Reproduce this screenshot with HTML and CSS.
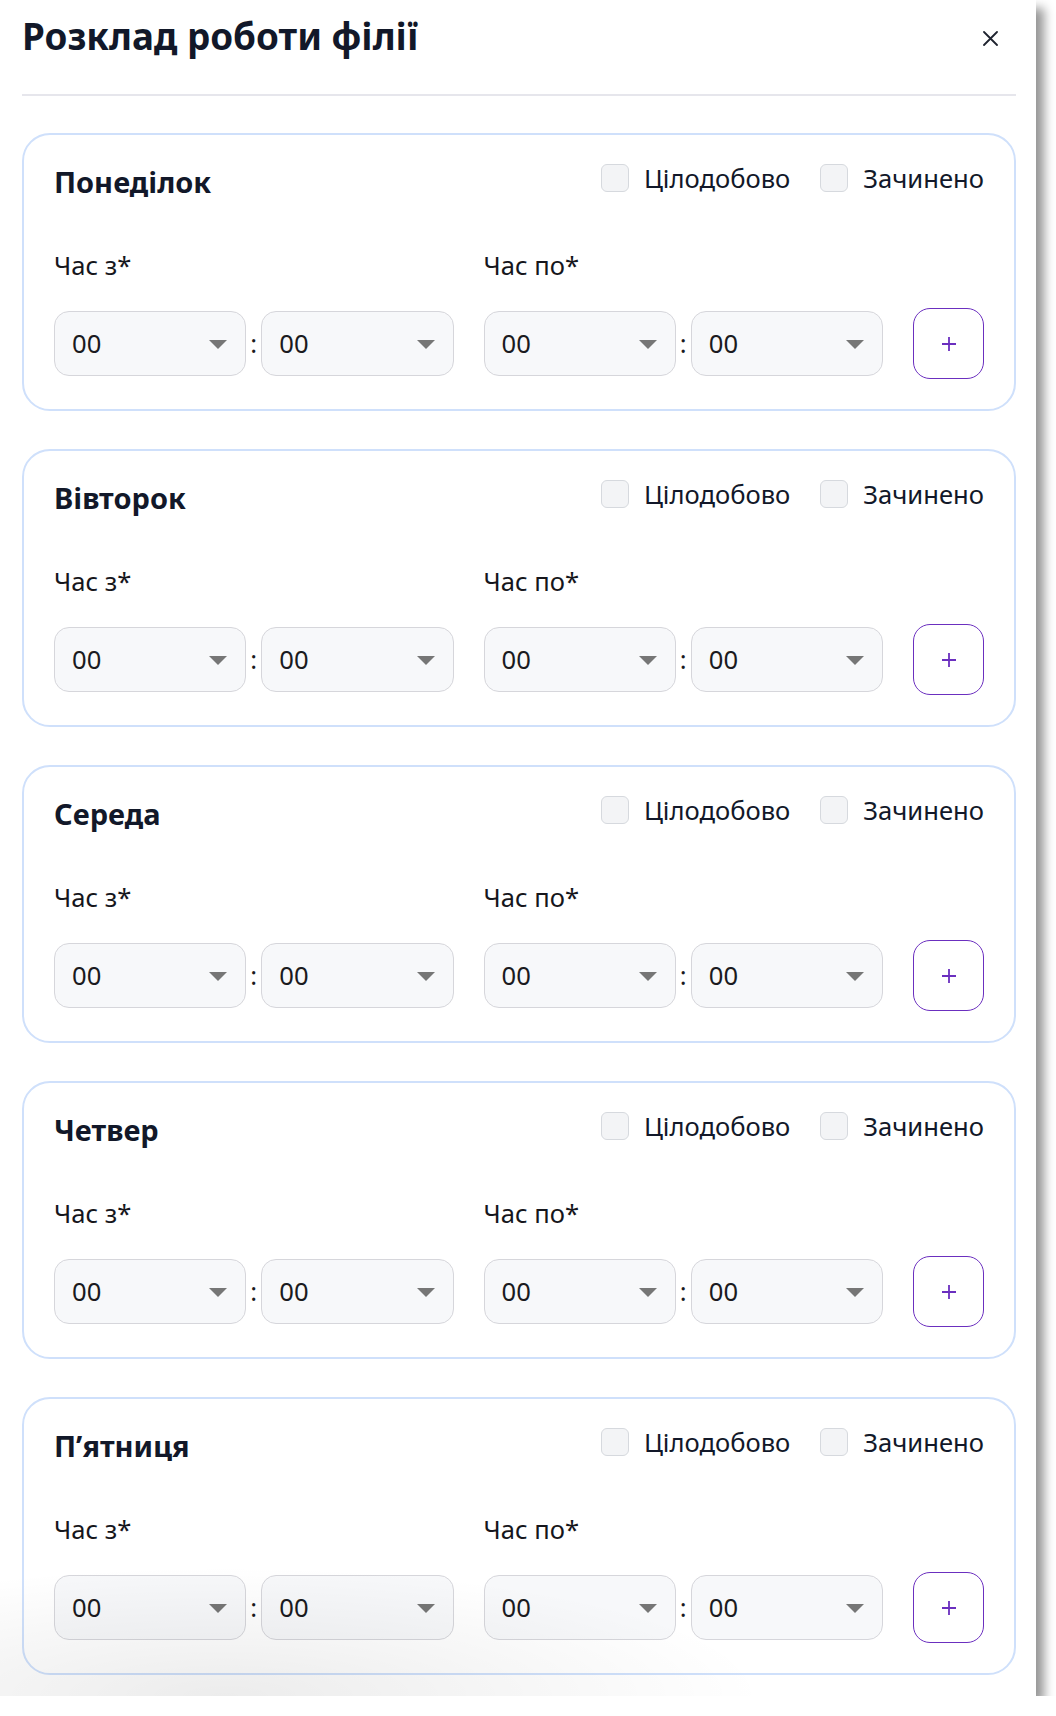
FILE: index.html
```html
<!DOCTYPE html>
<html lang="uk">
<head>
<meta charset="utf-8">
<title>Розклад роботи філії</title>
<link rel="stylesheet" href="styles.css">
</head>
<body>
<div class="modal">
  <header class="modal-head">
    <h1 class="modal-title">Розклад роботи філії</h1>
    <button class="close" aria-label="Закрити">
      <svg width="15" height="15" viewBox="0 0 15 15"><path d="M1 1L14 14M14 1L1 14" stroke="#1f2430" stroke-width="1.8" stroke-linecap="round"/></svg>
    </button>
  </header>

  <div class="days">
    <section class="day-card">
      <div class="day-head">
        <h2 class="day-name">Понеділок</h2>
        <div class="day-opts">
          <label class="opt"><span class="box"></span><span>Цілодобово</span></label>
          <label class="opt"><span class="box"></span><span>Зачинено</span></label>
        </div>
      </div>
      <div class="times">
        <div class="field-label">Час з*</div>
        <div class="field-label">Час по*</div>
        <div></div>
        <div class="pair"><div class="sel"><span>00</span><span class="caret"></span></div><span class="colon">:</span><div class="sel"><span>00</span><span class="caret"></span></div></div>
        <div class="pair"><div class="sel"><span>00</span><span class="caret"></span></div><span class="colon">:</span><div class="sel"><span>00</span><span class="caret"></span></div></div>
        <button class="add" aria-label="Додати"><svg width="16" height="16" viewBox="0 0 16 16"><path d="M8 1V15M1 8H15" stroke="#6b2fbf" stroke-width="1.8"/></svg></button>
      </div>
    </section>

    <section class="day-card">
      <div class="day-head">
        <h2 class="day-name">Вівторок</h2>
        <div class="day-opts">
          <label class="opt"><span class="box"></span><span>Цілодобово</span></label>
          <label class="opt"><span class="box"></span><span>Зачинено</span></label>
        </div>
      </div>
      <div class="times">
        <div class="field-label">Час з*</div>
        <div class="field-label">Час по*</div>
        <div></div>
        <div class="pair"><div class="sel"><span>00</span><span class="caret"></span></div><span class="colon">:</span><div class="sel"><span>00</span><span class="caret"></span></div></div>
        <div class="pair"><div class="sel"><span>00</span><span class="caret"></span></div><span class="colon">:</span><div class="sel"><span>00</span><span class="caret"></span></div></div>
        <button class="add" aria-label="Додати"><svg width="16" height="16" viewBox="0 0 16 16"><path d="M8 1V15M1 8H15" stroke="#6b2fbf" stroke-width="1.8"/></svg></button>
      </div>
    </section>

    <section class="day-card">
      <div class="day-head">
        <h2 class="day-name">Середа</h2>
        <div class="day-opts">
          <label class="opt"><span class="box"></span><span>Цілодобово</span></label>
          <label class="opt"><span class="box"></span><span>Зачинено</span></label>
        </div>
      </div>
      <div class="times">
        <div class="field-label">Час з*</div>
        <div class="field-label">Час по*</div>
        <div></div>
        <div class="pair"><div class="sel"><span>00</span><span class="caret"></span></div><span class="colon">:</span><div class="sel"><span>00</span><span class="caret"></span></div></div>
        <div class="pair"><div class="sel"><span>00</span><span class="caret"></span></div><span class="colon">:</span><div class="sel"><span>00</span><span class="caret"></span></div></div>
        <button class="add" aria-label="Додати"><svg width="16" height="16" viewBox="0 0 16 16"><path d="M8 1V15M1 8H15" stroke="#6b2fbf" stroke-width="1.8"/></svg></button>
      </div>
    </section>

    <section class="day-card">
      <div class="day-head">
        <h2 class="day-name">Четвер</h2>
        <div class="day-opts">
          <label class="opt"><span class="box"></span><span>Цілодобово</span></label>
          <label class="opt"><span class="box"></span><span>Зачинено</span></label>
        </div>
      </div>
      <div class="times">
        <div class="field-label">Час з*</div>
        <div class="field-label">Час по*</div>
        <div></div>
        <div class="pair"><div class="sel"><span>00</span><span class="caret"></span></div><span class="colon">:</span><div class="sel"><span>00</span><span class="caret"></span></div></div>
        <div class="pair"><div class="sel"><span>00</span><span class="caret"></span></div><span class="colon">:</span><div class="sel"><span>00</span><span class="caret"></span></div></div>
        <button class="add" aria-label="Додати"><svg width="16" height="16" viewBox="0 0 16 16"><path d="M8 1V15M1 8H15" stroke="#6b2fbf" stroke-width="1.8"/></svg></button>
      </div>
    </section>

    <section class="day-card">
      <div class="day-head">
        <h2 class="day-name">П’ятниця</h2>
        <div class="day-opts">
          <label class="opt"><span class="box"></span><span>Цілодобово</span></label>
          <label class="opt"><span class="box"></span><span>Зачинено</span></label>
        </div>
      </div>
      <div class="times">
        <div class="field-label">Час з*</div>
        <div class="field-label">Час по*</div>
        <div></div>
        <div class="pair"><div class="sel"><span>00</span><span class="caret"></span></div><span class="colon">:</span><div class="sel"><span>00</span><span class="caret"></span></div></div>
        <div class="pair"><div class="sel"><span>00</span><span class="caret"></span></div><span class="colon">:</span><div class="sel"><span>00</span><span class="caret"></span></div></div>
        <button class="add" aria-label="Додати"><svg width="16" height="16" viewBox="0 0 16 16"><path d="M8 1V15M1 8H15" stroke="#6b2fbf" stroke-width="1.8"/></svg></button>
      </div>
    </section>
  </div>
  <div class="fade"></div>
</div>
</body>
</html>
```
FILE: styles.css
```css
* { box-sizing: border-box; }

html, body {
  margin: 0;
  padding: 0;
  background: #ffffff;
}

body {
  font-family: "Noto Sans", "Open Sans", "DejaVu Sans", sans-serif;
  color: #16161c;
}

.modal {
  position: relative;
  width: 1036px;
  padding: 0 20px 21px 22px;
  background: #ffffff;
  box-shadow: 8px 8px 10px rgba(0, 0, 0, 0.42);
  overflow: hidden;
}

.modal-head {
  display: flex;
  justify-content: space-between;
  align-items: flex-start;
  padding-top: 12px;
  padding-bottom: 34px;
  border-bottom: 2px solid #e6e6ec;
}

.modal-title {
  margin: 0;
  font-size: 36.8px;
  line-height: 48px;
  font-weight: 700;
  color: #121829;
}

.close {
  margin: 19px 18px 0 0;
  padding: 0;
  border: 0;
  background: none;
  width: 15px;
  height: 15px;
  display: block;
}
.close svg { display: block; }

.days {
  display: flex;
  flex-direction: column;
  gap: 38px;
  margin-top: 37px;
}

.day-card {
  border: 2px solid #cfe0fb;
  border-radius: 28px;
  padding: 28px 30px 30px;
}

.day-head {
  display: flex;
  justify-content: space-between;
  align-items: flex-start;
  margin-bottom: 49px;
}

.day-name {
  margin: 0;
  font-size: 29px;
  line-height: 38px;
  font-weight: 700;
  color: #121829;
}

.day-opts {
  display: flex;
  gap: 30px;
}

.opt {
  display: flex;
  align-items: flex-start;
  gap: 15px;
  font-size: 25.6px;
  line-height: 32px;
  color: #121829;
}

.box {
  width: 28px;
  height: 28px;
  margin-top: 1px;
  border: 1px solid #d6d9de;
  border-radius: 6px;
  background: #f3f4f6;
  flex: none;
}

.times {
  display: grid;
  grid-template-columns: 1fr 1fr 71px;
  column-gap: 30px;
  row-gap: 26px;
  align-items: center;
}

.field-label {
  font-size: 25.6px;
  line-height: 32px;
  color: #16161c;
}

.pair {
  display: grid;
  grid-template-columns: 1fr 15px 1fr;
  align-items: center;
}

.sel {
  height: 65px;
  border: 1px solid #d6d6db;
  border-radius: 15px;
  background: #f7f8fa;
  display: flex;
  align-items: center;
  justify-content: space-between;
  padding: 0 18px 0 17px;
  font-size: 25.6px;
  color: #1a1a20;
}

.caret {
  width: 0;
  height: 0;
  border-left: 9px solid transparent;
  border-right: 9px solid transparent;
  border-top: 9px solid #767676;
  margin-top: 2px;
}

.colon {
  text-align: center;
  font-size: 25.6px;
  line-height: 32px;
  color: #1a1a20;
}

.add {
  width: 71px;
  height: 71px;
  border: 1.5px solid #6b2fbf;
  border-radius: 17px;
  background: #ffffff;
  padding: 0;
  display: flex;
  align-items: center;
  justify-content: center;
}
.add svg { display: block; }

.fade {
  position: absolute;
  left: 0;
  bottom: 0;
  width: 900px;
  height: 130px;
  pointer-events: none;
  background: radial-gradient(ellipse 60% 100% at 25% 100%, rgba(0, 0, 0, 0.075), rgba(0, 0, 0, 0) 100%);
}
```
